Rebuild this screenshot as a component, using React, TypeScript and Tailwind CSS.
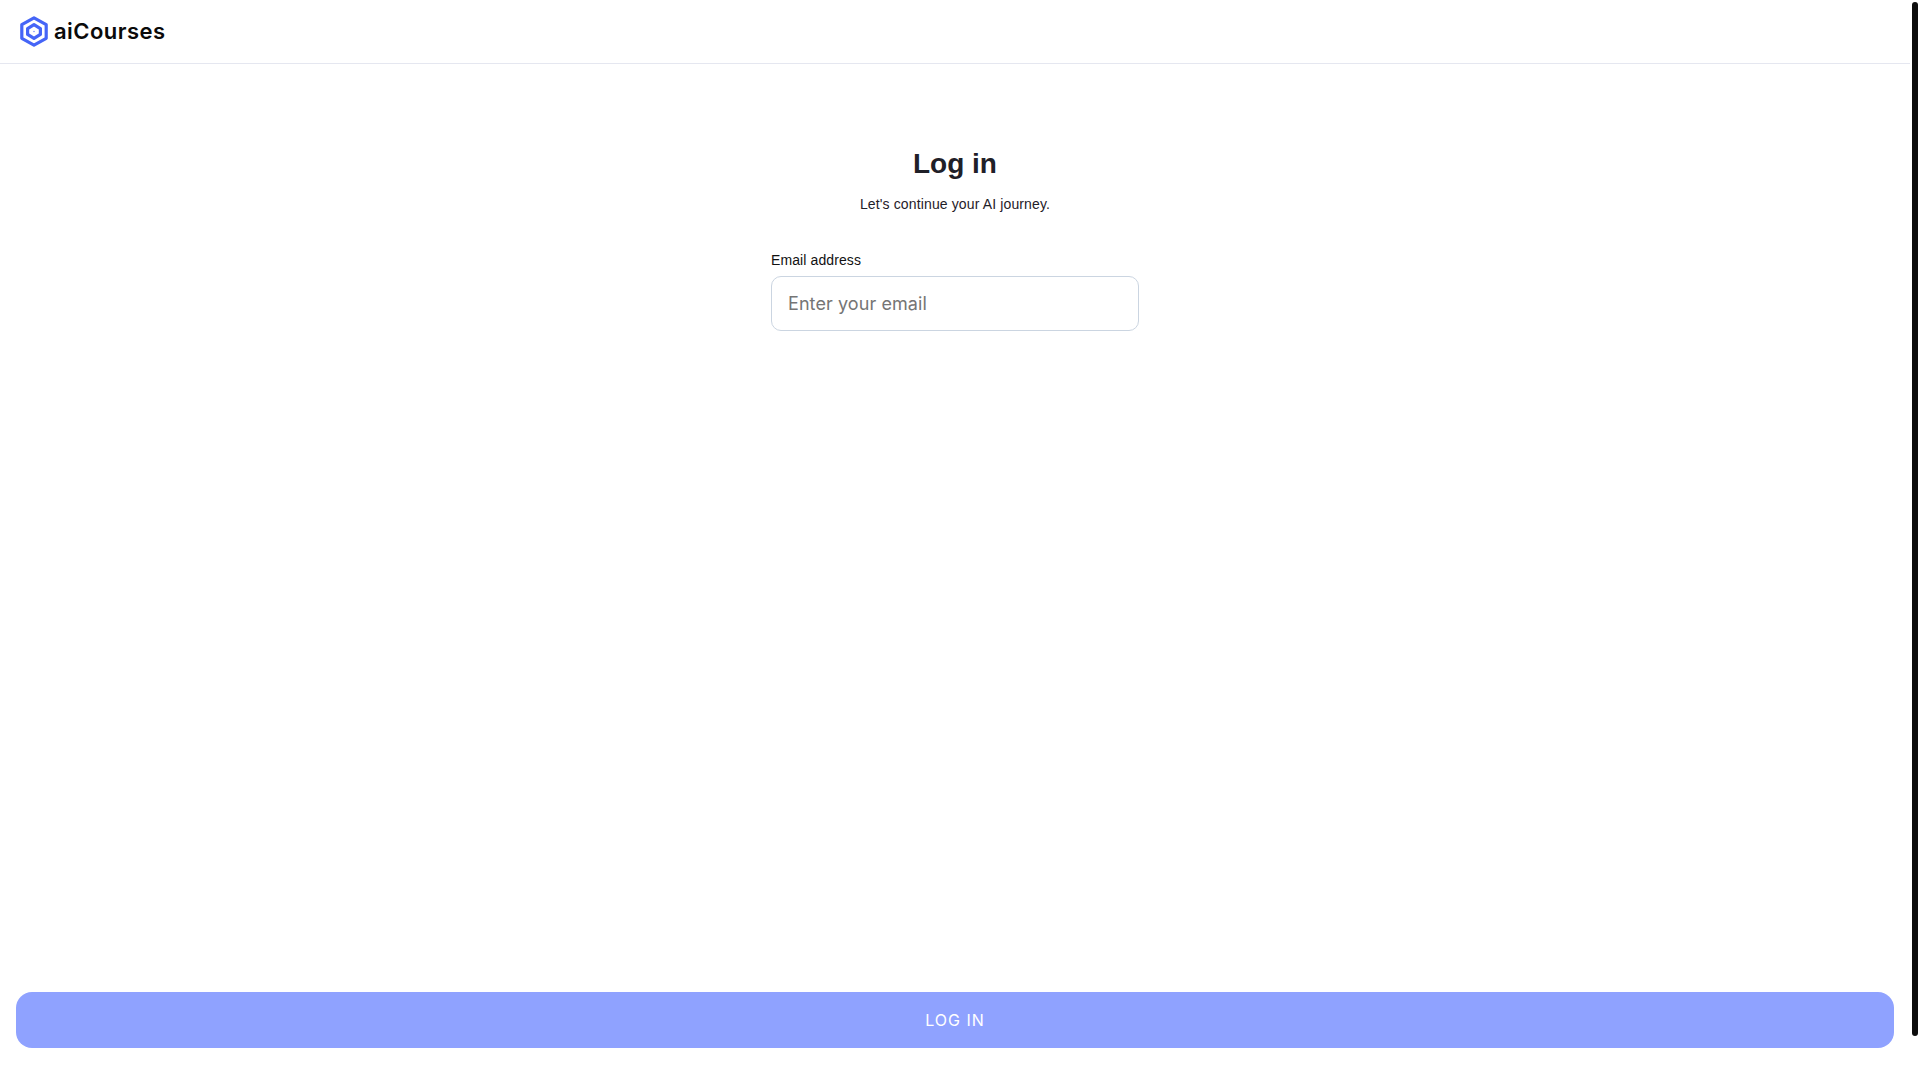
import React from "react";

function Logo() {
  return (
    <svg width="28" height="31" viewBox="0 0 28 31" fill="none" stroke="#4565f7">
      <path d="M14 1.8 L26.2 8.7 V22.3 L14 29.2 L1.8 22.3 V8.7 Z" strokeWidth="3.2" strokeLinejoin="round" />
      <path d="M14 8.6 L20.4 12.6 V18.4 L14 22.4 L7.6 18.4 V12.6 Z" strokeWidth="3.2" strokeLinejoin="round" />
      <circle cx="14" cy="15.5" r="0.8" fill="#7d90fa" strokeWidth="0" />
    </svg>
  );
}

export default function App() {
  return (
    <div className="relative flex h-[1080px] w-[1920px] overflow-hidden bg-white font-['Liberation_Sans',sans-serif]">
      <main className="flex h-full w-[1910px] flex-col">
        <header className="flex h-[64px] shrink-0 items-center gap-[6px] border-b border-[#e5e7f0] pl-[20px]">
          <Logo />
          <span className="pb-[2px] font-['Inter',sans-serif] text-[22px] leading-none font-semibold tracking-[0.45px] text-[#0a0a0a]">
            aiCourses
          </span>
        </header>

        <section className="flex flex-1 flex-col items-center pt-[83px]">
          <h1 className="text-[28px] leading-[34px] font-bold text-[#1f2028]">Log in</h1>
          <p className="mt-[13px] text-sm leading-[20px] tracking-[0.13px] text-[#1f2028]">
            Let's continue your AI journey.
          </p>

          <div className="mt-[36px] w-[368px]">
            <label className="block text-sm leading-[20px] tracking-[0.1px] text-[#111111]">Email address</label>
            <input
              type="email"
              placeholder="Enter your email"
              className="mt-[6px] h-[55px] w-full rounded-[10px] border border-[#cbd5e1] bg-white px-[16px] font-['Inter',sans-serif] text-lg tracking-[0.08px] outline-none placeholder:text-[#757575]"
            />
          </div>
        </section>

        <div className="px-[16px] pb-[32px]">
          <button className="h-[56px] w-full rounded-[16px] bg-[#8fa2ff] font-['Inter',sans-serif] text-base font-normal tracking-[1px] text-white">
            LOG IN
          </button>
        </div>
      </main>

      {/* scrollbar thumb */}
      <div className="mt-[2px] ml-[2px] h-[1034px] w-[6px] rounded-[3px] bg-[#0d0d0d]" />
    </div>
  );
}
